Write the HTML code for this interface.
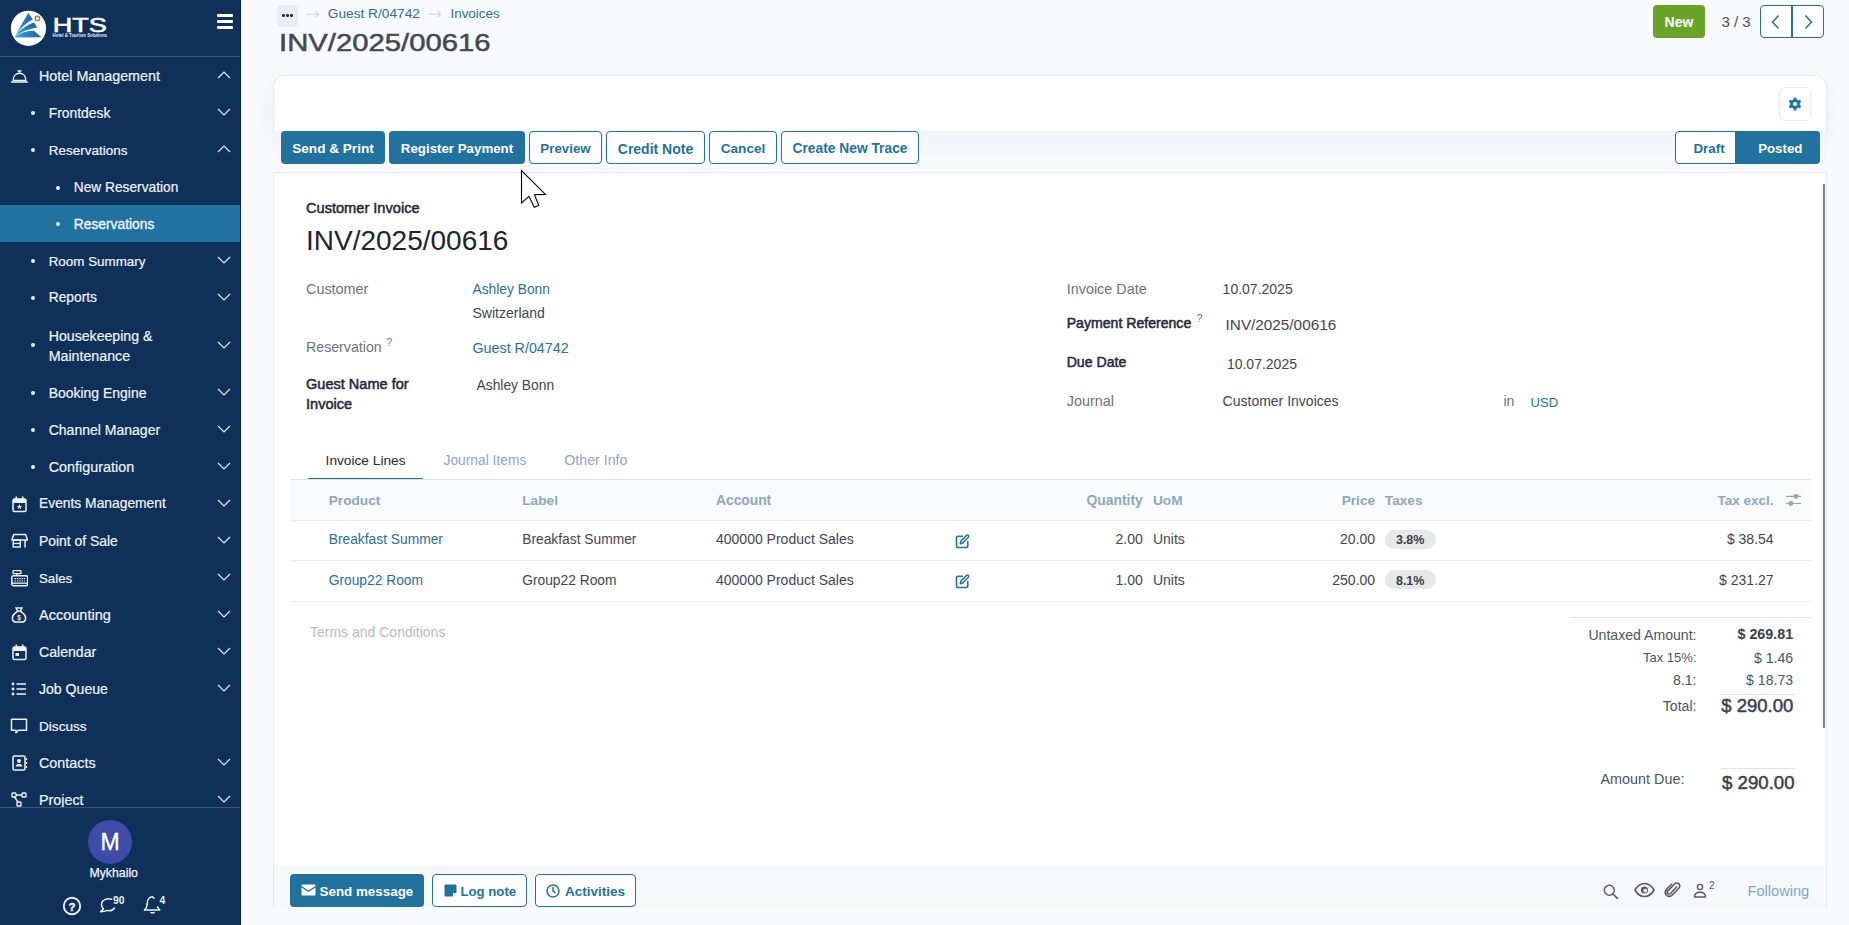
<!DOCTYPE html>
<html><head><meta charset="utf-8"><title>INV/2025/00616</title>
<style>
html,body{margin:0;padding:0;}
body{width:1849px;height:925px;overflow:hidden;position:relative;background:#f9fafd;font-family:"Liberation Sans",sans-serif;}
.a{position:absolute;white-space:nowrap;}
</style></head><body>
<div class="a" style="left:0px;top:0px;width:241px;height:925px;background:#0f3159;"></div><div class="a" style="left:240px;top:0px;width:1px;height:925px;background:#03224d;"></div><div class="a" style="left:241px;top:0px;width:1px;height:925px;background:#ffffff;"></div><div class="a" style="left:0px;top:56px;width:240px;height:1px;background:#3a5878;"></div><div class="a" style="left:0px;top:807px;width:240px;height:1px;background:#3a5878;"></div><div class="a" style="left:0px;top:205px;width:240px;height:37px;background:#2272a0;"></div><svg class="a" style="left:10px;top:10px;" width="38" height="38" viewBox="0 0 38 38" fill="none">
<defs><linearGradient id="lg" x1="0" y1="0" x2="1" y2="0"><stop offset="0" stop-color="#3aa0e0"/><stop offset="1" stop-color="#1d5fa6"/></linearGradient></defs>
<circle cx="18.5" cy="18.3" r="17.6" fill="#ffffff"/>
<path d="M18.2 3 L22.8 9.3 C16 13 9 20 5 25.8 Z" fill="url(#lg)"/>
<path d="M24.1 12.5 L27.2 17.4 C18 19 10 22.5 5.2 26.2 C9 20.5 16 15 24.1 12.5 Z" fill="url(#lg)"/>
<path d="M5.3 26.5 C11 22.5 17 20.7 23.8 20.7 L31.5 27.3 L5.5 27.5 Z" fill="url(#lg)"/>
<circle cx="27.4" cy="8.4" r="2.2" fill="#ffffff" stroke="#c8662a" stroke-width="1.3"/>
</svg><svg class="a" style="left:50px;top:10px;" width="62" height="30" viewBox="0 0 62 30" fill="none"><text x="2.8" y="21.5" font-size="20.5" font-weight="400" font-family="Liberation Sans" fill="#ffffff" stroke="#ffffff" stroke-width="0.6" textLength="54" lengthAdjust="spacingAndGlyphs">HTS</text><text x="2.6" y="27.4" font-size="4.6" font-weight="700" font-family="Liberation Sans" fill="#e8eef5" textLength="54.4" lengthAdjust="spacingAndGlyphs">Hotel &amp; Tourism Solutions</text></svg><div class="a" style="left:217px;top:14px;width:16px;height:3px;background:#ffffff;border-radius:1px;"></div><div class="a" style="left:217px;top:20px;width:16px;height:3px;background:#ffffff;border-radius:1px;"></div><div class="a" style="left:217px;top:26px;width:16px;height:3px;background:#ffffff;border-radius:1px;"></div><div class="a" style="top:66.88px;font-size:14.32px;line-height:18.62px;color:#eef2f7;left:39px;-webkit-text-stroke:0.2px #eef2f7;">Hotel Management</div><svg class="a" style="left:9.5px;top:67.6px;" width="18" height="18" viewBox="0 0 18 18" fill="none"><path d="M1.5 13.9 H17.4" stroke="#eef2f7" stroke-width="1.5" stroke-linecap="round"/><path d="M3.2 12.4 C3.2 8 6 5.3 9.5 5.3 C13 5.3 15.8 8 15.8 12.4 Z" stroke="#eef2f7" stroke-width="1.5" stroke-linejoin="round"/><path d="M8 2.9 H11" stroke="#eef2f7" stroke-width="1.5" stroke-linecap="round"/><path d="M9.5 3 V5.3" stroke="#eef2f7" stroke-width="1.3"/></svg><svg class="a" style="left:217.3px;top:71.00000000000001px;" width="14" height="9" viewBox="0 0 14 9" fill="none"><path d="M1 7 L7 1 L13 7" stroke="#e6ecf2" stroke-width="1.15" fill="none"/></svg><div class="a" style="left:31px;top:110.6px;width:4px;height:4px;background:#eef2f7;border-radius:50%;"></div><div class="a" style="top:104.04px;font-size:13.86px;line-height:18.02px;color:#eef2f7;left:48.7px;-webkit-text-stroke:0.2px #eef2f7;">Frontdesk</div><svg class="a" style="left:217.3px;top:107.7px;" width="14" height="9" viewBox="0 0 14 9" fill="none"><path d="M1 1 L7 7 L13 1" stroke="#e6ecf2" stroke-width="1.15" fill="none"/></svg><div class="a" style="left:31px;top:147.9px;width:4px;height:4px;background:#eef2f7;border-radius:50%;"></div><div class="a" style="top:141.71px;font-size:13.49px;line-height:17.54px;color:#eef2f7;left:48.7px;-webkit-text-stroke:0.2px #eef2f7;">Reservations</div><svg class="a" style="left:217.3px;top:145.0px;" width="14" height="9" viewBox="0 0 14 9" fill="none"><path d="M1 7 L7 1 L13 7" stroke="#e6ecf2" stroke-width="1.15" fill="none"/></svg><div class="a" style="left:56px;top:185.70000000000002px;width:4px;height:4px;background:#eef2f7;border-radius:50%;"></div><div class="a" style="top:178.98px;font-size:13.72px;line-height:17.84px;color:#eef2f7;left:73.8px;-webkit-text-stroke:0.2px #eef2f7;">New Reservation</div><div class="a" style="left:56px;top:222.3px;width:4px;height:4px;background:#eef2f7;border-radius:50%;"></div><div class="a" style="top:215.50px;font-size:13.8px;line-height:17.94px;color:#eef2f7;left:73.8px;-webkit-text-stroke:0.35px #eef2f7;">Reservations</div><div class="a" style="left:31px;top:258.8px;width:4px;height:4px;background:#eef2f7;border-radius:50%;"></div><div class="a" style="top:252.70px;font-size:13.4px;line-height:17.42px;color:#eef2f7;left:48.7px;-webkit-text-stroke:0.2px #eef2f7;">Room Summary</div><svg class="a" style="left:217.3px;top:255.9px;" width="14" height="9" viewBox="0 0 14 9" fill="none"><path d="M1 1 L7 7 L13 1" stroke="#e6ecf2" stroke-width="1.15" fill="none"/></svg><div class="a" style="left:31px;top:295.7px;width:4px;height:4px;background:#eef2f7;border-radius:50%;"></div><div class="a" style="top:289.20px;font-size:13.8px;line-height:17.94px;color:#eef2f7;left:48.7px;-webkit-text-stroke:0.2px #eef2f7;">Reports</div><svg class="a" style="left:217.3px;top:292.79999999999995px;" width="14" height="9" viewBox="0 0 14 9" fill="none"><path d="M1 1 L7 7 L13 1" stroke="#e6ecf2" stroke-width="1.15" fill="none"/></svg><div class="a" style="left:31px;top:390.6px;width:4px;height:4px;background:#eef2f7;border-radius:50%;"></div><div class="a" style="top:383.94px;font-size:13.96px;line-height:18.15px;color:#eef2f7;left:48.7px;-webkit-text-stroke:0.2px #eef2f7;">Booking Engine</div><svg class="a" style="left:217.3px;top:387.7px;" width="14" height="9" viewBox="0 0 14 9" fill="none"><path d="M1 1 L7 7 L13 1" stroke="#e6ecf2" stroke-width="1.15" fill="none"/></svg><div class="a" style="left:31px;top:427.7px;width:4px;height:4px;background:#eef2f7;border-radius:50%;"></div><div class="a" style="top:420.97px;font-size:14.03px;line-height:18.24px;color:#eef2f7;left:48.7px;-webkit-text-stroke:0.2px #eef2f7;">Channel Manager</div><svg class="a" style="left:217.3px;top:424.79999999999995px;" width="14" height="9" viewBox="0 0 14 9" fill="none"><path d="M1 1 L7 7 L13 1" stroke="#e6ecf2" stroke-width="1.15" fill="none"/></svg><div class="a" style="left:31px;top:464.8px;width:4px;height:4px;background:#eef2f7;border-radius:50%;"></div><div class="a" style="top:457.71px;font-size:14.39px;line-height:18.71px;color:#eef2f7;left:48.7px;-webkit-text-stroke:0.2px #eef2f7;">Configuration</div><svg class="a" style="left:217.3px;top:461.9px;" width="14" height="9" viewBox="0 0 14 9" fill="none"><path d="M1 1 L7 7 L13 1" stroke="#e6ecf2" stroke-width="1.15" fill="none"/></svg><div class="a" style="top:495.37px;font-size:13.83px;line-height:17.98px;color:#eef2f7;left:39px;-webkit-text-stroke:0.2px #eef2f7;">Events Management</div><svg class="a" style="left:9.5px;top:494.9px;" width="18" height="18" viewBox="0 0 18 18" fill="none"><rect x="3" y="4" width="13" height="12.5" rx="1.6" stroke="#eef2f7" stroke-width="1.5"/><rect x="3" y="4" width="13" height="4" rx="1.2" fill="#eef2f7"/><path d="M6.3 1.5 V5 M12.7 1.5 V5" stroke="#eef2f7" stroke-width="1.6"/><path d="M9.5 9.3 L10.3 11 L12.1 11.1 L10.7 12.2 L11.2 14 L9.5 13 L7.8 14 L8.3 12.2 L6.9 11.1 L8.7 11 Z" fill="#eef2f7"/></svg><svg class="a" style="left:217.3px;top:498.99999999999994px;" width="14" height="9" viewBox="0 0 14 9" fill="none"><path d="M1 1 L7 7 L13 1" stroke="#e6ecf2" stroke-width="1.15" fill="none"/></svg><div class="a" style="top:532.39px;font-size:13.91px;line-height:18.08px;color:#eef2f7;left:39px;-webkit-text-stroke:0.2px #eef2f7;">Point of Sale</div><svg class="a" style="left:9.5px;top:532.0px;" width="18" height="18" viewBox="0 0 18 18" fill="none"><path d="M1.8 8 L3.8 2.5 H15.6 L17.6 8 Z" stroke="#eef2f7" stroke-width="1.5" stroke-linejoin="round"/><rect x="3.2" y="8" width="7" height="7" stroke="#eef2f7" stroke-width="1.4"/><path d="M3.2 11.5 H10.2" stroke="#eef2f7" stroke-width="1.3"/><path d="M15 8 V15.5" stroke="#eef2f7" stroke-width="1.5"/></svg><svg class="a" style="left:217.3px;top:536.1px;" width="14" height="9" viewBox="0 0 14 9" fill="none"><path d="M1 1 L7 7 L13 1" stroke="#e6ecf2" stroke-width="1.15" fill="none"/></svg><div class="a" style="top:569.93px;font-size:13.27px;line-height:17.25px;color:#eef2f7;left:39px;-webkit-text-stroke:0.2px #eef2f7;">Sales</div><svg class="a" style="left:9.5px;top:568.9px;" width="18" height="18" viewBox="0 0 18 18" fill="none"><rect x="3" y="1.6" width="8" height="3" rx="0.6" stroke="#eef2f7" stroke-width="1.3"/><path d="M7 4.6 V6.5" stroke="#eef2f7" stroke-width="1.3"/><rect x="1.8" y="6.7" width="15.8" height="10" rx="1.6" stroke="#eef2f7" stroke-width="1.5"/><path d="M4.5 9.6 H15 M4.5 12 H15" stroke="#eef2f7" stroke-width="1.2" stroke-dasharray="1.4 1"/><path d="M1.8 14.2 H17.6" stroke="#eef2f7" stroke-width="1.3"/></svg><svg class="a" style="left:217.3px;top:573.0px;" width="14" height="9" viewBox="0 0 14 9" fill="none"><path d="M1 1 L7 7 L13 1" stroke="#e6ecf2" stroke-width="1.15" fill="none"/></svg><div class="a" style="top:605.77px;font-size:14.53px;line-height:18.89px;color:#eef2f7;left:39px;-webkit-text-stroke:0.2px #eef2f7;">Accounting</div><svg class="a" style="left:9.5px;top:606.0px;" width="18" height="18" viewBox="0 0 18 18" fill="none"><path d="M6 2 H12 L10.5 5 H7.5 Z" stroke="#eef2f7" stroke-width="1.4"/><path d="M7.5 5.5 C3 8 2 11 2.5 13.5 C3 15.5 4.5 16 6 16 H12 C13.5 16 15 15.5 15.5 13.5 C16 11 15 8 10.5 5.5" stroke="#eef2f7" stroke-width="1.5"/><text x="9" y="14" font-size="6.5" font-family="Liberation Sans" font-weight="700" fill="#eef2f7" text-anchor="middle">$</text></svg><svg class="a" style="left:217.3px;top:610.1px;" width="14" height="9" viewBox="0 0 14 9" fill="none"><path d="M1 1 L7 7 L13 1" stroke="#e6ecf2" stroke-width="1.15" fill="none"/></svg><div class="a" style="top:643.18px;font-size:14.12px;line-height:18.36px;color:#eef2f7;left:39px;-webkit-text-stroke:0.2px #eef2f7;">Calendar</div><svg class="a" style="left:9.5px;top:643.0px;" width="18" height="18" viewBox="0 0 18 18" fill="none"><rect x="3" y="4" width="13" height="12.5" rx="1.6" stroke="#eef2f7" stroke-width="1.5"/><rect x="3" y="4" width="13" height="4" rx="1.2" fill="#eef2f7"/><path d="M6.3 1.5 V5 M12.7 1.5 V5" stroke="#eef2f7" stroke-width="1.6"/><rect x="5.5" y="10" width="3.5" height="3" fill="#eef2f7"/></svg><svg class="a" style="left:217.3px;top:647.1px;" width="14" height="9" viewBox="0 0 14 9" fill="none"><path d="M1 1 L7 7 L13 1" stroke="#e6ecf2" stroke-width="1.15" fill="none"/></svg><div class="a" style="top:680.22px;font-size:14.08px;line-height:18.3px;color:#eef2f7;left:39px;-webkit-text-stroke:0.2px #eef2f7;">Job Queue</div><svg class="a" style="left:9.5px;top:680.0px;" width="18" height="18" viewBox="0 0 18 18" fill="none"><circle cx="3" cy="4" r="1.4" fill="#eef2f7"/><circle cx="3" cy="9" r="1.4" fill="#eef2f7"/><circle cx="3" cy="14" r="1.4" fill="#eef2f7"/><path d="M6.5 4 H16 M6.5 9 H16 M6.5 14 H16" stroke="#eef2f7" stroke-width="1.6"/></svg><svg class="a" style="left:217.3px;top:684.1px;" width="14" height="9" viewBox="0 0 14 9" fill="none"><path d="M1 1 L7 7 L13 1" stroke="#e6ecf2" stroke-width="1.15" fill="none"/></svg><div class="a" style="top:717.80px;font-size:13.6px;line-height:17.68px;color:#eef2f7;left:39px;-webkit-text-stroke:0.2px #eef2f7;">Discuss</div><svg class="a" style="left:9.5px;top:717.1px;" width="18" height="18" viewBox="0 0 18 18" fill="none"><path d="M1.5 2.2 H16.5 V13.2 H8.5 L6 15.8 V13.2 H1.5 Z" stroke="#eef2f7" stroke-width="1.5" stroke-linejoin="round"/></svg><div class="a" style="top:754.06px;font-size:14.34px;line-height:18.64px;color:#eef2f7;left:39px;-webkit-text-stroke:0.2px #eef2f7;">Contacts</div><svg class="a" style="left:9.5px;top:754.1px;" width="18" height="18" viewBox="0 0 18 18" fill="none"><rect x="3" y="2" width="12" height="14" rx="1.5" stroke="#eef2f7" stroke-width="1.5"/><circle cx="9" cy="7" r="2" fill="#eef2f7"/><path d="M5.5 12.5 C6 10.5 7.5 10 9 10 C10.5 10 12 10.5 12.5 12.5 Z" fill="#eef2f7"/><path d="M16.5 4 V6 M16.5 8 V10 M16.5 12 V14" stroke="#eef2f7" stroke-width="1.2"/></svg><svg class="a" style="left:217.3px;top:758.2px;" width="14" height="9" viewBox="0 0 14 9" fill="none"><path d="M1 1 L7 7 L13 1" stroke="#e6ecf2" stroke-width="1.15" fill="none"/></svg><div class="a" style="top:791.20px;font-size:14.3px;line-height:18.59px;color:#eef2f7;left:39px;-webkit-text-stroke:0.2px #eef2f7;">Project</div><svg class="a" style="left:9.5px;top:791.2px;" width="18" height="18" viewBox="0 0 18 18" fill="none"><rect x="2" y="2" width="4" height="4" rx="0.8" stroke="#eef2f7" stroke-width="1.4"/><rect x="12" y="2" width="4" height="4" rx="0.8" stroke="#eef2f7" stroke-width="1.4"/><rect x="7" y="11" width="4" height="4" rx="0.8" stroke="#eef2f7" stroke-width="1.4"/><path d="M6 4 H12 M4.5 6 L8 11" stroke="#eef2f7" stroke-width="1.4"/></svg><svg class="a" style="left:217.3px;top:795.3000000000001px;" width="14" height="9" viewBox="0 0 14 9" fill="none"><path d="M1 1 L7 7 L13 1" stroke="#e6ecf2" stroke-width="1.15" fill="none"/></svg><div class="a" style="top:326.55px;font-size:14.15px;line-height:18.39px;color:#eef2f7;left:48.7px;-webkit-text-stroke:0.2px #eef2f7;">Housekeeping &amp;</div><div class="a" style="top:346.67px;font-size:14.23px;line-height:18.5px;color:#eef2f7;left:48.7px;-webkit-text-stroke:0.2px #eef2f7;">Maintenance</div><div class="a" style="left:31px;top:343.3px;width:4px;height:4px;background:#eef2f7;border-radius:50%;"></div><svg class="a" style="left:217.3px;top:341.2px;" width="14" height="9" viewBox="0 0 14 9" fill="none"><path d="M1 1 L7 7 L13 1" stroke="#e6ecf2" stroke-width="1.15" fill="none"/></svg><div class="a" style="left:0px;top:808px;width:240px;height:117px;background:#0f3159;"></div><div class="a" style="left:0px;top:807px;width:240px;height:1px;background:#3a5878;"></div><div class="a" style="left:88px;top:820px;width:44px;height:44px;background:#3f4ba8;border-radius:50%;"></div><div class="a" style="top:828.33px;font-size:23px;line-height:29.9px;color:#ffffff;left:-190px;width:600px;text-align:center;-webkit-text-stroke:0.35px #ffffff;">M</div><div class="a" style="top:865.59px;font-size:12.3px;line-height:15.99px;color:#eef2f7;left:-186.3px;width:600px;text-align:center;-webkit-text-stroke:0.25px #eef2f7;">Mykhailo</div><svg class="a" style="left:62px;top:896px;" width="20" height="20" viewBox="0 0 20 20" fill="none"><circle cx="10" cy="10" r="8.2" stroke="#eef2f7" stroke-width="1.9"/><text x="10" y="14.6" font-size="11.5" font-weight="700" font-family="Liberation Sans" fill="#eef2f7" stroke="#eef2f7" stroke-width="0.4" text-anchor="middle">?</text></svg><svg class="a" style="left:99px;top:896px;" width="18" height="18" viewBox="0 0 18 18" fill="none"><path d="M12.5 3.3 C8.5 1.8 2.5 3.8 2.5 8.5 C2.5 10.5 3.3 11.8 4.5 12.8 L1.6 15.8 C4.5 15.7 6.5 15.2 8 14.4 C11 15.2 14 14.2 15.5 12" stroke="#eef2f7" stroke-width="1.5" stroke-linecap="round" stroke-linejoin="round"/></svg><div class="a" style="top:894.29px;font-size:10.3px;line-height:13.39px;color:#eef2f7;font-weight:700;left:113px;">90</div><svg class="a" style="left:143px;top:894px;" width="18" height="22" viewBox="0 0 18 22" fill="none"><path d="M1.5 16 C3.5 14 4.3 12 4.3 9 C4.3 5.5 6.5 3 9.5 2.8 L11 4.2" stroke="#eef2f7" stroke-width="1.5" stroke-linecap="round" stroke-linejoin="round"/><path d="M1.5 16 H16.8 C15.8 15.2 15 14.2 14.6 13" stroke="#eef2f7" stroke-width="1.5" stroke-linecap="round" stroke-linejoin="round"/><path d="M8 18.8 H11" stroke="#eef2f7" stroke-width="1.6" stroke-linecap="round"/></svg><div class="a" style="top:894.29px;font-size:10.3px;line-height:13.39px;color:#eef2f7;font-weight:700;left:159.5px;">4</div><div class="a" style="left:277px;top:5px;width:21px;height:21.5px;background:#e8eef5;border-radius:4px;"></div><div class="a" style="left:282.2px;top:14px;width:2.6px;height:2.6px;background:#1d2d44;border-radius:50%;"></div><div class="a" style="left:286.2px;top:14px;width:2.6px;height:2.6px;background:#1d2d44;border-radius:50%;"></div><div class="a" style="left:290.2px;top:14px;width:2.6px;height:2.6px;background:#1d2d44;border-radius:50%;"></div><svg class="a" style="left:306px;top:10px;" width="14" height="8" viewBox="0 0 14 8" fill="none"><path d="M0.5 4.3 H12.5 M9.5 1.3 L12.5 4.3 L9.5 7.3" stroke="#c9d3dc" stroke-width="1.1"/></svg><div class="a" style="top:4.50px;font-size:13.7px;line-height:17.81px;color:#2a6f9c;left:327.8px;">Guest R/04742</div><svg class="a" style="left:428px;top:10px;" width="14" height="8" viewBox="0 0 14 8" fill="none"><path d="M0.5 4.3 H12.5 M9.5 1.3 L12.5 4.3 L9.5 7.3" stroke="#c9d3dc" stroke-width="1.1"/></svg><div class="a" style="top:4.80px;font-size:13.4px;line-height:17.42px;color:#2a6f9c;left:450.5px;">Invoices</div><svg class="a" style="left:277.10px;top:20.88px" width="217.5" height="39.4"><text x="2" y="29.52" font-family="Liberation Sans" font-size="24.6" font-weight="400" fill="#434950" stroke="#434950" stroke-width="0.5" textLength="211.5" lengthAdjust="spacingAndGlyphs">INV/2025/00616</text></svg><div class="a" style="left:1653px;top:5px;width:52px;height:33px;background:#6aa325;border-radius:4px;"></div><div class="a" style="top:12.80px;font-size:14px;line-height:18.2px;color:#ffffff;font-weight:700;left:1379px;width:600px;text-align:center;">New</div><div class="a" style="top:12.30px;font-size:15px;line-height:19.5px;color:#4b5058;left:1436px;width:600px;text-align:center;">3 / 3</div><div class="a" style="left:1760px;top:5px;width:64px;height:33px;box-sizing:border-box;border:1px solid #2272a0;border-radius:4px;background:#fff;"></div><div class="a" style="left:1791px;top:5px;width:1.6px;height:33px;background:#2272a0;"></div><svg class="a" style="left:1769px;top:14px;" width="14" height="16" viewBox="0 0 14 16" fill="none"><path d="M9.5 1.5 L3.5 8 L9.5 14.5" stroke="#2272a0" stroke-width="1.5"/></svg><svg class="a" style="left:1801px;top:14px;" width="14" height="16" viewBox="0 0 14 16" fill="none"><path d="M4.5 1.5 L10.5 8 L4.5 14.5" stroke="#2272a0" stroke-width="1.5"/></svg><div class="a" style="left:273px;top:75px;width:1554px;height:56px;box-sizing:border-box;background:#ffffff;border:1px solid #e4eaf2;border-bottom:none;border-radius:12px 12px 0 0;box-shadow:0 8px 26px rgba(70,90,130,0.07);"></div><div class="a" style="left:273px;top:131px;width:1554px;height:41.5px;background:linear-gradient(#f1f4f9,#f9fafd);"></div><div class="a" style="left:273px;top:172px;width:1554px;height:694px;box-sizing:border-box;background:#ffffff;border:1px solid #e4eaf2;border-bottom:none;"></div><div class="a" style="left:273px;top:866px;width:1554px;height:42px;box-sizing:border-box;background:#f6f8fa;border-left:1px solid #e4eaf2;border-right:1px solid #e4eaf2;"></div><div class="a" style="left:273px;top:172px;width:1554px;height:1px;background:#e6ecf3;"></div><div class="a" style="left:1779px;top:86.5px;width:32px;height:34px;box-sizing:border-box;border:1px solid #e8ecf1;border-radius:6px;background:#fff;"></div><svg class="a" style="left:1788px;top:97px;" width="14" height="14" viewBox="0 0 14 14" fill="none"><path fill="#2272a0" fill-rule="evenodd" d="M5.8 0.6 H8.2 L8.6 2.4 L10.2 3.3 L12 2.7 L13.2 4.8 L11.8 6.1 V7.9 L13.2 9.2 L12 11.3 L10.2 10.7 L8.6 11.6 L8.2 13.4 H5.8 L5.4 11.6 L3.8 10.7 L2 11.3 L0.8 9.2 L2.2 7.9 V6.1 L0.8 4.8 L2 2.7 L3.8 3.3 L5.4 2.4 Z M7 4.9 A2.1 2.1 0 1 0 7 9.1 A2.1 2.1 0 1 0 7 4.9 Z"/></svg><div class="a" style="left:281px;top:131px;width:104px;height:33px;background:#2272a0;border-radius:4px;"></div><div class="a" style="top:140.10px;font-size:13.6px;line-height:17.68px;color:#ffffff;font-weight:700;left:33.0px;width:600px;text-align:center;">Send &amp; Print</div><div class="a" style="left:389px;top:131px;width:136px;height:33px;background:#2272a0;border-radius:4px;"></div><div class="a" style="top:140.40px;font-size:13.3px;line-height:17.29px;color:#ffffff;font-weight:700;left:157.0px;width:600px;text-align:center;">Register Payment</div><div class="a" style="left:529px;top:131px;width:73px;height:33px;box-sizing:border-box;background:#ffffff;border:1px solid #2272a0;border-radius:4px;"></div><div class="a" style="top:140.40px;font-size:13.3px;line-height:17.29px;color:#2272a0;font-weight:700;left:265.5px;width:600px;text-align:center;">Preview</div><div class="a" style="left:606px;top:131px;width:99px;height:33px;box-sizing:border-box;background:#ffffff;border:1px solid #2272a0;border-radius:4px;"></div><div class="a" style="top:139.70px;font-size:14.0px;line-height:18.2px;color:#2272a0;font-weight:700;left:355.5px;width:600px;text-align:center;">Credit Note</div><div class="a" style="left:709px;top:131px;width:68px;height:33px;box-sizing:border-box;background:#ffffff;border:1px solid #2272a0;border-radius:4px;"></div><div class="a" style="top:140.10px;font-size:13.6px;line-height:17.68px;color:#2272a0;font-weight:700;left:443.0px;width:600px;text-align:center;">Cancel</div><div class="a" style="left:781px;top:131px;width:138px;height:33px;box-sizing:border-box;background:#ffffff;border:1px solid #2272a0;border-radius:4px;"></div><div class="a" style="top:139.90px;font-size:13.8px;line-height:17.94px;color:#2272a0;font-weight:700;left:550.0px;width:600px;text-align:center;">Create New Trace</div><div class="a" style="left:1675px;top:131px;width:145px;height:33px;box-sizing:border-box;border:1px solid #2272a0;border-radius:4px;background:#fff;"></div><div class="a" style="left:1735px;top:131px;width:85px;height:33px;background:#2272a0;border-radius:0 4px 4px 0;"></div><div class="a" style="top:140.30px;font-size:13.4px;line-height:17.42px;color:#2272a0;font-weight:700;left:1409px;width:600px;text-align:center;">Draft</div><div class="a" style="top:140.40px;font-size:13.3px;line-height:17.29px;color:#ffffff;font-weight:700;left:1480.3px;width:600px;text-align:center;">Posted</div><div class="a" style="left:1823px;top:184px;width:2px;height:544px;background:#7c7f84;"></div><div class="a" style="top:198.90px;font-size:14.6px;line-height:18.98px;color:#1f2937;left:306px;-webkit-text-stroke:0.5px #1f2937;">Customer Invoice</div><div class="a" style="top:222.95px;font-size:28px;line-height:36.4px;color:#20242b;left:306px;">INV/2025/00616</div><div class="a" style="top:280.00px;font-size:14.4px;line-height:18.72px;color:#6b7280;left:306px;">Customer</div><div class="a" style="top:281.00px;font-size:13.8px;line-height:17.94px;color:#2a6f9c;left:472.5px;">Ashley Bonn</div><div class="a" style="top:304.30px;font-size:14px;line-height:18.2px;color:#3f4650;left:472.5px;">Switzerland</div><div class="a" style="top:337.80px;font-size:14.2px;line-height:18.46px;color:#6b7280;left:306px;">Reservation</div><div class="a" style="top:335.79px;font-size:10.5px;line-height:13.65px;color:#2f8ad0;left:386.3px;">?</div><div class="a" style="top:339.00px;font-size:14.3px;line-height:18.59px;color:#2a6f9c;left:472.5px;">Guest R/04742</div><div class="a" style="top:374.55px;font-size:14.55px;line-height:18.92px;color:#1f2937;left:306px;-webkit-text-stroke:0.5px #1f2937;">Guest Name for</div><div class="a" style="top:395.35px;font-size:14.55px;line-height:18.92px;color:#1f2937;left:306px;-webkit-text-stroke:0.5px #1f2937;">Invoice</div><div class="a" style="top:377.10px;font-size:13.8px;line-height:17.94px;color:#3f4650;left:476.6px;">Ashley Bonn</div><div class="a" style="top:279.80px;font-size:14.4px;line-height:18.72px;color:#6b7280;left:1066.7px;">Invoice Date</div><div class="a" style="top:280.30px;font-size:14px;line-height:18.2px;color:#3f4650;left:1222.6px;">10.07.2025</div><div class="a" style="top:314.20px;font-size:14.1px;line-height:18.33px;color:#1f2937;left:1066.7px;-webkit-text-stroke:0.5px #1f2937;">Payment Reference</div><div class="a" style="top:311.79px;font-size:10.5px;line-height:13.65px;color:#2f8ad0;left:1196.6px;">?</div><div class="a" style="top:315.00px;font-size:15.3px;line-height:19.89px;color:#3f4650;left:1225.6px;">INV/2025/00616</div><div class="a" style="top:353.20px;font-size:14.1px;line-height:18.33px;color:#1f2937;left:1066.7px;-webkit-text-stroke:0.5px #1f2937;">Due Date</div><div class="a" style="top:354.70px;font-size:14px;line-height:18.2px;color:#3f4650;left:1226.9px;">10.07.2025</div><div class="a" style="top:391.90px;font-size:14.4px;line-height:18.72px;color:#6b7280;left:1066.7px;">Journal</div><div class="a" style="top:392.30px;font-size:14px;line-height:18.2px;color:#3f4650;left:1222.6px;">Customer Invoices</div><div class="a" style="top:392.30px;font-size:14px;line-height:18.2px;color:#6b7280;left:1503.4px;">in</div><div class="a" style="top:394.20px;font-size:13.1px;line-height:17.03px;color:#2a6f9c;left:1530.6px;">USD</div><div class="a" style="top:451.60px;font-size:13.7px;line-height:17.81px;color:#1f2937;left:325.6px;">Invoice Lines</div><div class="a" style="top:451.50px;font-size:13.8px;line-height:17.94px;color:#8ea8c0;left:443.5px;">Journal Items</div><div class="a" style="top:451.10px;font-size:14.2px;line-height:18.46px;color:#8ea8c0;left:564.3px;">Other Info</div><div class="a" style="left:290px;top:479px;width:1521px;height:1px;background:#dfe3e8;"></div><div class="a" style="left:308px;top:477.6px;width:115px;height:1.6px;background:#2272a0;border-radius:1px;"></div><div class="a" style="left:290px;top:480px;width:1521px;height:40px;background:#f9fbfd;"></div><div class="a" style="left:290px;top:520px;width:1521px;height:1px;background:#e9edf2;"></div><div class="a" style="left:290px;top:560px;width:1521px;height:1px;background:#e9edf2;"></div><div class="a" style="left:290px;top:601px;width:1521px;height:1px;background:#e9edf2;"></div><div class="a" style="top:491.60px;font-size:13.7px;line-height:17.81px;color:#8ea8c0;font-weight:700;left:328.7px;">Product</div><div class="a" style="top:491.60px;font-size:13.7px;line-height:17.81px;color:#8ea8c0;font-weight:700;left:522.2px;">Label</div><div class="a" style="top:491.50px;font-size:13.8px;line-height:17.94px;color:#8ea8c0;font-weight:700;left:716px;">Account</div><div class="a" style="top:491.40px;font-size:13.9px;line-height:18.07px;color:#8ea8c0;font-weight:700;right:706.20px;">Quantity</div><div class="a" style="top:491.60px;font-size:13.7px;line-height:17.81px;color:#8ea8c0;font-weight:700;left:1152.9px;">UoM</div><div class="a" style="top:491.60px;font-size:13.7px;line-height:17.81px;color:#8ea8c0;font-weight:700;right:473.90px;">Price</div><div class="a" style="top:491.60px;font-size:13.7px;line-height:17.81px;color:#8ea8c0;font-weight:700;left:1384.8px;">Taxes</div><div class="a" style="top:491.80px;font-size:13.5px;line-height:17.55px;color:#8ea8c0;font-weight:700;right:75.40px;">Tax excl.</div><svg class="a" style="left:1785px;top:492px;" width="17" height="16" viewBox="0 0 17 16" fill="none"><path d="M1 4.3 H16 M1 11.5 H16" stroke="#8ea8c0" stroke-width="1.2"/><circle cx="11" cy="4.3" r="2.4" fill="#8ea8c0"/><circle cx="5.8" cy="11.5" r="2.4" fill="#8ea8c0"/></svg><div class="a" style="top:530.50px;font-size:13.8px;line-height:17.94px;color:#2a6f9c;left:328.7px;">Breakfast Summer</div><div class="a" style="top:530.50px;font-size:13.8px;line-height:17.94px;color:#3f4650;left:522.2px;">Breakfast Summer</div><div class="a" style="top:530.30px;font-size:14px;line-height:18.2px;color:#3f4650;left:716px;">400000 Product Sales</div><svg class="a" style="left:955px;top:534px;" width="15" height="14.5" viewBox="0 0 15 14.5" fill="none"><path d="M7.5 2.2 H3.3 C2.3 2.2 1.5 3 1.5 4 V11.7 C1.5 12.7 2.3 13.5 3.3 13.5 H11 C12 13.5 12.8 12.7 12.8 11.7 V7.5" stroke="#2272a0" stroke-width="1.6" stroke-linecap="round"/><path d="M5.3 9.7 L5.8 7.2 L11.6 1.4 C12.1 0.9 12.9 0.9 13.4 1.4 C13.9 1.9 13.9 2.7 13.4 3.2 L7.6 9 Z" stroke="#2272a0" stroke-width="1.5" stroke-linejoin="round"/></svg><div class="a" style="top:530.30px;font-size:14px;line-height:18.2px;color:#3f4650;right:706.20px;">2.00</div><div class="a" style="top:530.30px;font-size:14px;line-height:18.2px;color:#3f4650;left:1152.9px;">Units</div><div class="a" style="top:530.30px;font-size:14px;line-height:18.2px;color:#3f4650;right:473.90px;">20.00</div><div class="a" style="left:1385px;top:530px;width:50.5px;height:19px;background:#e7e8ea;border-radius:10px;"></div><div class="a" style="top:531.79px;font-size:12.5px;line-height:16.25px;color:#3b4048;font-weight:700;left:1110.2px;width:600px;text-align:center;">3.8%</div><div class="a" style="top:530.30px;font-size:14px;line-height:18.2px;color:#3f4650;right:75.40px;">$ 38.54</div><div class="a" style="top:571.50px;font-size:13.8px;line-height:17.94px;color:#2a6f9c;left:328.7px;">Group22 Room</div><div class="a" style="top:571.50px;font-size:13.8px;line-height:17.94px;color:#3f4650;left:522.2px;">Group22 Room</div><div class="a" style="top:571.30px;font-size:14px;line-height:18.2px;color:#3f4650;left:716px;">400000 Product Sales</div><svg class="a" style="left:955px;top:574px;" width="15" height="14.5" viewBox="0 0 15 14.5" fill="none"><path d="M7.5 2.2 H3.3 C2.3 2.2 1.5 3 1.5 4 V11.7 C1.5 12.7 2.3 13.5 3.3 13.5 H11 C12 13.5 12.8 12.7 12.8 11.7 V7.5" stroke="#2272a0" stroke-width="1.6" stroke-linecap="round"/><path d="M5.3 9.7 L5.8 7.2 L11.6 1.4 C12.1 0.9 12.9 0.9 13.4 1.4 C13.9 1.9 13.9 2.7 13.4 3.2 L7.6 9 Z" stroke="#2272a0" stroke-width="1.5" stroke-linejoin="round"/></svg><div class="a" style="top:571.30px;font-size:14px;line-height:18.2px;color:#3f4650;right:706.20px;">1.00</div><div class="a" style="top:571.30px;font-size:14px;line-height:18.2px;color:#3f4650;left:1152.9px;">Units</div><div class="a" style="top:571.30px;font-size:14px;line-height:18.2px;color:#3f4650;right:473.90px;">250.00</div><div class="a" style="left:1385px;top:570px;width:50.5px;height:19px;background:#e7e8ea;border-radius:10px;"></div><div class="a" style="top:572.79px;font-size:12.5px;line-height:16.25px;color:#3b4048;font-weight:700;left:1110.2px;width:600px;text-align:center;">8.1%</div><div class="a" style="top:571.30px;font-size:14px;line-height:18.2px;color:#3f4650;right:75.40px;">$ 231.27</div><div class="a" style="top:623.30px;font-size:14px;line-height:18.2px;color:#b4bcc6;left:310px;">Terms and Conditions</div><div class="a" style="left:1570px;top:617px;width:241px;height:1px;background:#dfe3e8;"></div><div class="a" style="top:625.50px;font-size:14.1px;line-height:18.33px;color:#4b5563;right:152.50px;">Untaxed Amount:</div><div class="a" style="top:625.30px;font-size:14.3px;line-height:18.59px;color:#374151;font-weight:700;right:55.90px;">$ 269.81</div><div class="a" style="top:649.60px;font-size:13.0px;line-height:16.9px;color:#4b5563;right:152.50px;">Tax 15%:</div><div class="a" style="top:648.50px;font-size:14.1px;line-height:18.33px;color:#4b5563;right:55.90px;">$ 1.46</div><div class="a" style="top:671.20px;font-size:14.1px;line-height:18.33px;color:#4b5563;right:152.50px;">8.1:</div><div class="a" style="top:671.20px;font-size:14.1px;line-height:18.33px;color:#4b5563;right:55.90px;">$ 18.73</div><div class="a" style="left:1719.5px;top:694px;width:74px;height:1px;background:#dfe3e8;"></div><div class="a" style="top:697.30px;font-size:14.1px;line-height:18.33px;color:#4b5563;right:152.50px;">Total:</div><div class="a" style="top:694.21px;font-size:18.5px;line-height:24.05px;color:#38414c;right:55.70px;-webkit-text-stroke:0.5px #38414c;">$ 290.00</div><div class="a" style="left:1721px;top:768px;width:74px;height:1px;background:#dfe3e8;"></div><div class="a" style="top:770.30px;font-size:14.4px;line-height:18.72px;color:#4b5563;right:164.60px;">Amount Due:</div><div class="a" style="top:771.12px;font-size:18.6px;line-height:24.18px;color:#38414c;right:54.50px;-webkit-text-stroke:0.5px #38414c;">$ 290.00</div><div class="a" style="left:290px;top:874px;width:134px;height:32.5px;background:#2272a0;border-radius:4px;"></div><div class="a" style="left:432px;top:874px;width:95px;height:32.5px;box-sizing:border-box;background:#ffffff;border:1px solid #2272a0;border-radius:4px;"></div><div class="a" style="left:535px;top:874px;width:101px;height:32.5px;box-sizing:border-box;background:#ffffff;border:1px solid #2272a0;border-radius:4px;"></div><svg class="a" style="left:301px;top:884px;" width="15" height="12" viewBox="0 0 15 12" fill="none"><path d="M0.5 1.5 C0.5 0.9 0.9 0.5 1.5 0.5 H13.5 C14.1 0.5 14.5 0.9 14.5 1.5 V2 L7.5 6.5 L0.5 2 Z" fill="#ffffff"/><path d="M0.5 3.5 L7.5 8 L14.5 3.5 V10.5 C14.5 11.1 14.1 11.5 13.5 11.5 H1.5 C0.9 11.5 0.5 11.1 0.5 10.5 Z" fill="#ffffff"/></svg><div class="a" style="top:882.90px;font-size:13.4px;line-height:17.42px;color:#ffffff;font-weight:700;left:66.39999999999998px;width:600px;text-align:center;">Send message</div><svg class="a" style="left:443.5px;top:884px;" width="13" height="13" viewBox="0 0 13 13" fill="none"><path d="M1.5 0.5 H11.5 C12 0.5 12.5 1 12.5 1.5 V8.5 L8.5 12.5 H1.5 C1 12.5 0.5 12 0.5 11.5 V1.5 C0.5 1 1 0.5 1.5 0.5 Z" fill="#2272a0"/><path d="M12.5 9 L9 12.5 V10 C9 9.4 9.4 9 10 9 Z" fill="#ffffff"/></svg><div class="a" style="top:883.10px;font-size:13.2px;line-height:17.16px;color:#2272a0;font-weight:700;left:188.3px;width:600px;text-align:center;">Log note</div><svg class="a" style="left:546px;top:883.5px;" width="14" height="14" viewBox="0 0 14 14" fill="none"><circle cx="7" cy="7" r="6" stroke="#2272a0" stroke-width="1.5"/><path d="M7 3.5 V7 L9.2 8.6" stroke="#2272a0" stroke-width="1.5" stroke-linecap="round"/></svg><div class="a" style="top:882.80px;font-size:13.5px;line-height:17.55px;color:#2272a0;font-weight:700;left:295px;width:600px;text-align:center;">Activities</div><svg class="a" style="left:1603px;top:883.5px;" width="16" height="15" viewBox="0 0 16 15" fill="none"><circle cx="6.3" cy="6.3" r="5" stroke="#565d68" stroke-width="1.5"/><path d="M10 10 L14.5 14.5" stroke="#565d68" stroke-width="1.7" stroke-linecap="round"/></svg><svg class="a" style="left:1633.5px;top:882px;" width="21" height="16" viewBox="0 0 21 16" fill="none"><path d="M1 8 C3.5 3.5 7 1.5 10.5 1.5 C14 1.5 17.5 3.5 20 8 C17.5 12.5 14 14.5 10.5 14.5 C7 14.5 3.5 12.5 1 8 Z" stroke="#565d68" stroke-width="1.6"/><circle cx="10.5" cy="8" r="3.6" fill="#565d68"/><circle cx="11.3" cy="8.6" r="1.9" fill="#f7f8fa"/></svg><svg class="a" style="left:1663.5px;top:881px;" width="18" height="18" viewBox="0 0 18 18" fill="none"><path d="M12.5 6 L6.5 12.5 C5.7 13.3 4.5 13.3 3.8 12.6 C3.1 11.9 3.1 10.7 3.9 9.9 L10.6 3 C11.9 1.7 13.8 1.8 14.9 2.9 C16 4 16.1 5.9 14.8 7.2 L8.3 14 C6.6 15.8 3.9 15.9 2.3 14.3 C0.7 12.7 0.8 10 2.6 8.3 L7.5 3.3" stroke="#565d68" stroke-width="1.6" stroke-linecap="round"/></svg><svg class="a" style="left:1692.5px;top:882px;" width="14" height="16" viewBox="0 0 14 16" fill="none"><circle cx="7" cy="5" r="2.6" stroke="#565d68" stroke-width="1.4"/><path d="M1.5 15 C1.5 11.5 3.8 10.2 7 10.2 C10.2 10.2 12.5 11.5 12.5 15 Z" stroke="#565d68" stroke-width="1.4" stroke-linejoin="round"/></svg><div class="a" style="top:879.28px;font-size:10px;line-height:13.0px;color:#565d68;left:1709px;">2</div><div class="a" style="top:882.30px;font-size:14.6px;line-height:18.98px;color:#7ea7c9;left:1747.6px;">Following</div><svg class="a" style="left:515px;top:165px;" width="40" height="50" viewBox="0 0 40 50" fill="none"><path d="M6.5 5.5 L6.5 38 L14 31.3 L19.2 42.3 L23.7 40.4 L19.5 29.7 L30.5 29.4 Z" fill="#ffffff" stroke="#000000" stroke-width="1.1" stroke-linejoin="miter"/></svg>
</body></html>
